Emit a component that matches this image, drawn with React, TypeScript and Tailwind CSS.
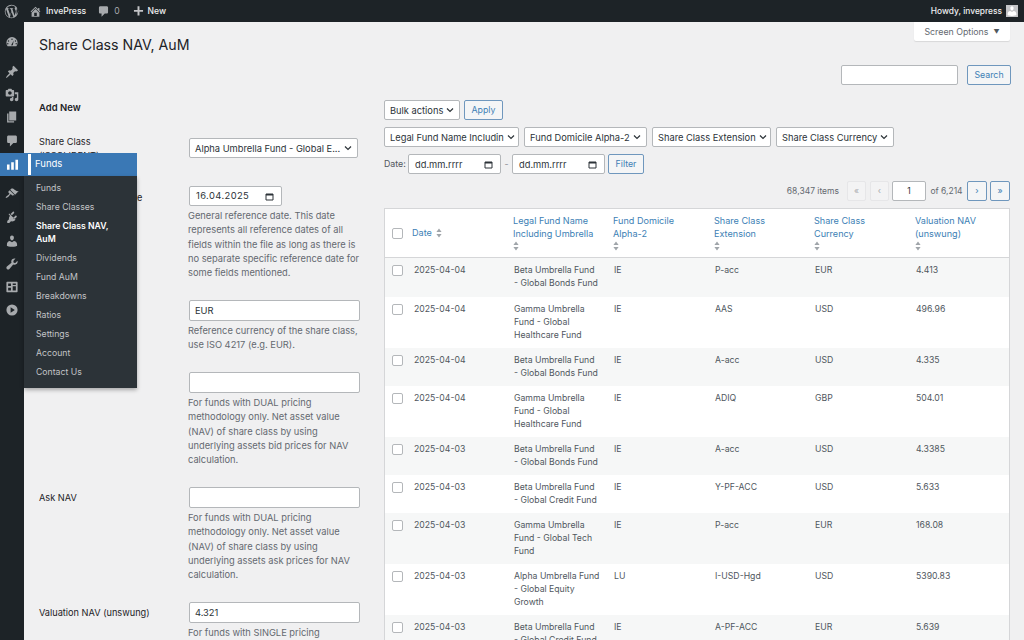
import React from "react";

const rows = [
  ["2025-04-04", "Beta Umbrella Fund\n- Global Bonds Fund", "IE", "P-acc", "EUR", "4.413", "h-[39px]"],
  ["2025-04-04", "Gamma Umbrella Fund - Global Healthcare Fund", "IE", "AAS", "USD", "496.96", "h-[51px]"],
  ["2025-04-04", "Beta Umbrella Fund\n- Global Bonds Fund", "IE", "A-acc", "USD", "4.335", "h-[38px]"],
  ["2025-04-04", "Gamma Umbrella Fund - Global Healthcare Fund", "IE", "ADIQ", "GBP", "504.01", "h-[51px]"],
  ["2025-04-03", "Beta Umbrella Fund\n- Global Bonds Fund", "IE", "A-acc", "USD", "4.3385", "h-[38px]"],
  ["2025-04-03", "Beta Umbrella Fund\n- Global Credit Fund", "IE", "Y-PF-ACC", "USD", "5.633", "h-[38px]"],
  ["2025-04-03", "Gamma Umbrella Fund - Global Tech Fund", "IE", "P-acc", "EUR", "168.08", "h-[51px]"],
  ["2025-04-03", "Alpha Umbrella Fund\n- Global Equity Growth", "LU", "I-USD-Hgd", "USD", "5390.83", "h-[51px]"],
  ["2025-04-03", "Beta Umbrella Fund\n- Global Credit Fund", "IE", "A-PF-ACC", "EUR", "5.639", "h-[38px]"],
];

const submenu = ["Funds", "Share Classes", "Share Class NAV, AuM", "Dividends", "Fund AuM", "Breakdowns", "Ratios", "Settings", "Account", "Contact Us"];

function Dash({ d, size = 14, className = "" }: { d: string; size?: number; className?: string }) {
  return (
    <svg width={size} height={size} viewBox="0 0 20 20" fill="currentColor" fillRule="evenodd" className={"shrink-0 " + className}>
      <path d={d} />
    </svg>
  );
}

const icons = {
  home: "M16 8.5l1.53 1.53-1.06 1.06L10 4.62l-6.47 6.47-1.06-1.06L10 2.5l4 4v-2h2v4zm-6-2.46l6 5.99V18H4v-5.97zM12 17v-5H8v5h4z",
  bubble: "M5 2h10c1.1 0 2 .9 2 2v7c0 1.1-.9 2-2 2h-3l-5 5v-5H5c-1.1 0-2-.9-2-2V4c0-1.100.9-2 2-2z",
  plus: "M17 7.500v3h-5.500V16h-3v-5.500H3v-3h5.500V2h3v5.500z",
  gauge: "M3.760 16h12.480A7.980 7.980 0 0 0 18 11a8 8 0 0 0-16 0c0 1.890.660 3.630 1.760 5zM10 5a1 1 0 1 1 0 2 1 1 0 0 1 0-2zM5 7.500a1 1 0 1 1 0 2 1 1 0 0 1 0-2zM15 7.500a1 1 0 1 1 0 2 1 1 0 0 1 0-2zM4 11.500a1 1 0 1 1 0 2 1 1 0 0 1 0-2zM16 11.500a1 1 0 1 1 0 2 1 1 0 0 1 0-2zM9 14.500a1.500 1.500 0 0 1 .6-1.200L12.500 8l-1.200 5.800A1.500 1.500 0 0 1 9 14.500z",
  pin: "M10.440 3.020l1.820-1.820 6.360 6.350-1.830 1.820c-1.050-.680-2.480-.570-3.410.360l-.750.750c-.920.930-1.040 2.350-.350 3.410l-1.830 1.820-2.410-2.410-2.800 2.790c-.420.420-3.380 2.710-3.800 2.290s1.860-3.390 2.280-3.810l2.790-2.790L4.100 9.360l1.830-1.820c1.050.690 2.480.570 3.400-.360l.750-.750c.930-.920 1.050-2.350.360-3.410z",
  media: "M13 11V4c0-.550-.450-1-1-1h-1.670L9 1H5L3.670 3H2c-.550 0-1 .450-1 1v7c0 .550.450 1 1 1h10c.550 0 1-.450 1-1zM7 4.500c1.380 0 2.500 1.120 2.500 2.500S8.380 9.500 7 9.500 4.500 8.380 4.500 7 5.620 4.500 7 4.500zM14 6h5v10.500c0 1.380-1.120 2.500-2.500 2.500S14 17.880 14 16.500s1.120-2.500 2.500-2.500c.170 0 .340.020.500.050V9h-3V6zm-4 8.050V13h2v3.500c0 1.380-1.120 2.500-2.500 2.500S7 17.880 7 16.500 8.120 14 9.500 14c.170 0 .340.020.500.050z",
  page: "M6 15V2h10v13H6zm-1 1h8v2H3V5h2v11z",
  brush: "M14.480 11.060L7.410 3.990l1.500-1.500c.5-.560 2.300-.470 3.510.320 1.210.800 1.430 1.280 2.910 2.100 1.180.640 2.450 1.260 4.230.910zm-.710.710L6.700 4.700 4.930 6.470c-.390.390-.390 1.020 0 1.410l1.060 1.060c.390.390.390 1.030 0 1.420-.600.600-1.430 1.110-2.210 1.690-.350.260-.700.530-1.010.840C1.430 13.230 1 15.800 1 15.800s2.570-.430 3.920-1.770c.310-.310.580-.660.840-1.010.580-.780 1.090-1.610 1.690-2.210.390-.390 1.020-.390 1.410 0l1.060 1.060c.390.390 1.020.390 1.410 0z",
  plugin: "M13.110 4.360L9.870 7.600 8 5.730l3.240-3.240c.350-.340 1.050-.250 1.540.240.490.490.580 1.190.330 1.630zM5.110 6.130l.910-1.120 9.010 9.010-1.190.840c-1.230.930-2.550 1.400-3.900 1.400-.460 0-.930-.060-1.370-.170l-2.530 2.530H3.200v-2.830l2.530-2.530c-.400-1.700.140-3.450 1.370-5.130zM16.500 8.490c.490.490.580 1.190.240 1.540l-3.240 3.240-1.880-1.870 3.240-3.240c.340-.340 1.050-.260 1.640.330z",
  user: "M10 9.250c-2.270 0-2.730-3.440-2.730-3.440C7 4.020 7.820 2 9.970 2c2.160 0 2.980 2.020 2.710 3.810 0 0-.410 3.440-2.680 3.440zm0 2.570L12.720 10c2.390 0 4.520 2.330 4.520 4.530v2.490s-3.650 1.130-7.240 1.130c-3.650 0-7.240-1.130-7.240-1.130v-2.490c0-2.250 1.940-4.480 4.150-4.480z",
  wrench: "M16.680 9.770c-1.340 1.340-3.300 1.670-4.950.990l-5.410 6.520c-.990.990-2.590.990-3.570 0-.990-.990-.990-2.590 0-3.570l6.520-5.420c-.680-1.650-.350-3.610.990-4.950 1.280-1.280 3.120-1.640 4.720-1.110L11.880 5.790 12.400 8.110l2.320.520 3.060-3.100c.530 1.600.170 3.440-1.100 4.720z",
  grid: "M3 2.500h14c.550 0 1 .450 1 1v13c0 .550-.450 1-1 1H3c-.550 0-1-.450-1-1v-13c0-.550.450-1 1-1zM4.500 5v3.500h4V5zM11 5v2h4.500V5zM11 9v6h4.500V9zM4.500 11v4h4v-4z",
  play: "M10 2a8 8 0 1 0 0 16 8 8 0 0 0 0-16zM8 6l6 4-6 4z",
  chart: "M1.500 10h4v8h-4zM8 6.500h4V18H8zM14.500 2.500h4V18h-4z",
  wp: "M10 1a9 9 0 1 0 0 18 9 9 0 0 0 0-18zM2 10c0-1.200.3-2.300.7-3.300l3.800 10.500A8 8 0 0 1 2 10zm8 8c-.8 0-1.500-.1-2.300-.3l2.400-7 2.500 6.800A8 8 0 0 1 10 18zm1.100-11.800c.5 0 .9-.1.9-.1.4 0 .4-.7 0-.7 0 0-1.300.1-2.100.1s-2.100-.1-2.100-.1c-.4 0-.5.7 0 .7 0 0 .4.1.9.1l1.200 3.400-1.700 5.200L5.300 6.200c.5 0 .9-.1.9-.1.4 0 .4-.7 0-.7 0 0-1.300.1-2.100.1h-.5A8 8 0 0 1 15.600 4.300h-.1c-.8 0-1.300.7-1.300 1.400s.4 1.200.8 1.900c.3.6.7 1.300.7 2.400 0 .7-.3 1.600-.7 2.700l-.9 3-3-9.500zm5.700 8a8 8 0 0 0 .3-9.500c.1.400.1.800.1 1.200 0 .8-.2 1.800-.6 2.900z",
};

function Sort() {
  return (
    <svg width="6" height="10" viewBox="0 0 6 10" className="inline-block">
      <path d="M3 0.500 L5.600 4 H0.400 Z M3 9.500 L0.400 6 H5.600 Z" fill="#a0a5aa" />
    </svg>
  );
}

function Chevron() {
  return (
    <svg width="8" height="8" viewBox="0 0 8 8" className="shrink-0 ml-[3px]">
      <path d="M1 2.500 L4 5.500 L7 2.500" fill="none" stroke="#2c3338" strokeWidth="1.200" />
    </svg>
  );
}

function CalendarIcon() {
  return (
    <svg width="9" height="9" viewBox="0 0 9 9" className="shrink-0">
      <path d="M1 2H8V8H1Z" fill="none" stroke="#2c3338" strokeWidth="1" />
      <path d="M1 2H8V3.500H1Z" fill="#2c3338" />
    </svg>
  );
}

function Select({ children, className = "" }: { children: React.ReactNode; className?: string }) {
  return (
    <div className={"h-[20px] flex items-center justify-between bg-white border border-[#b4b7ba] rounded-[2px] pl-[5px] pr-[5px] text-[#2c3338] whitespace-nowrap overflow-hidden " + className}>
      <span className="pt-[1px]">{children}</span>
      <Chevron />
    </div>
  );
}

function Btn({ children, className = "" }: { children: React.ReactNode; className?: string }) {
  return (
    <div className={"h-[20px] flex items-center justify-center bg-[#f4f5f6] border border-[#6f97bd] rounded-[2px] text-[8.8px] text-[#3d7fb5] " + className}>{children}</div>
  );
}

function DateBox({ value, className = "" }: { value: string; className?: string }) {
  return (
    <div className={"h-[20px] flex items-center justify-between bg-white border border-[#b4b7ba] rounded-[2px] pl-[6px] pr-[7px] text-[#2c3338] " + className}>
      <span className="pt-[1px]">{value}</span>
      <CalendarIcon />
    </div>
  );
}

function Field({ label, children, labelClass = "" }: { label?: string; children: React.ReactNode; labelClass?: string }) {
  return (
    <div className="flex">
      <div className={"w-[150px] shrink-0 text-[9.2px] text-[#1d2327] " + labelClass}>{label}</div>
      <div className="w-[172px]">{children}</div>
    </div>
  );
}

function Input({ value = "" }: { value?: string }) {
  return <div className="w-[171px] h-[21px] bg-white border border-[#b4b7ba] rounded-[2px] flex items-center px-[5px] text-[9.3px] text-[#2c3338]">{value}</div>;
}

function Desc({ children }: { children: React.ReactNode }) {
  return <p className="text-[9.3px] leading-[14.3px] text-[#646970] mt-[3px] w-[173px] -ml-[1px]">{children}</p>;
}

const sideItems: [string, string][] = [
  [icons.gauge, "mt-[13px]"],
  [icons.pin, "mt-[16px]"],
  [icons.media, "mt-[8.5px]"],
  [icons.page, "mt-[8.5px]"],
  [icons.bubble, "mt-[9.5px]"],
  [icons.brush, "mt-[39px]"],
  [icons.plugin, "mt-[9.5px]"],
  [icons.user, "mt-[10px]"],
  [icons.wrench, "mt-[8.5px]"],
  [icons.grid, "mt-[9.5px]"],
  [icons.play, "mt-[8.5px]"],
];

const headCols: [string, string][] = [
  ["Legal Fund Name Including Umbrella", "w-[100px]"],
  ["Fund Domicile Alpha-2", "w-[101px]"],
  ["Share Class Extension", "w-[100px]"],
  ["Share Class Currency", "w-[101px]"],
  ["Valuation NAV (unswung)", "w-[90px]"],
];

export default function App() {
  return (
    <div className="w-[1024px] h-[640px] overflow-hidden relative bg-[#f0f0f1] flex flex-col font-['Inter','Liberation_Sans',sans-serif]">
      <header className="h-[22px] shrink-0 bg-[#1d2327] flex items-center text-[8.6px] text-[#f0f0f1] pl-[4px] pr-[6px]">
        <Dash d={icons.wp} size={15} className="text-[#a7aaad] mr-[10px]" />
        <Dash d={icons.home} size={13} className="text-[#a7aaad] mr-[4px]" />
        <span className="mr-[11px] font-medium">InvePress</span>
        <Dash d={icons.bubble} size={13} className="text-[#a7aaad] mr-[4px]" />
        <span className="mr-[12px] text-[#a7aaad]">0</span>
        <Dash d={icons.plus} size={13} className="text-[#c3c4c7] mr-[3px]" />
        <span className="font-medium">New</span>
        <span className="ml-auto font-medium text-[8.4px]">Howdy, invepress</span>
        <div className="ml-[4px] w-[12px] h-[12px] bg-[#c3c4c7] flex items-end justify-center overflow-hidden text-white"><Dash d={icons.user} size={12} /></div>
      </header>

      <div className="flex flex-1 min-h-0">
        <aside className="w-[24px] shrink-0 bg-[#1d2327] flex flex-col items-center text-[#a7aaad]">
          {sideItems.map(([d, m], i) => (
            <Dash key={i} d={d} size={14} className={m} />
          ))}
        </aside>

        <main className="flex-1 min-w-0 relative px-[15px]">
          <div className="absolute right-[14px] top-0 w-[96px] h-[19px] bg-white rounded-b-[2px] shadow-[0_1px_1px_rgba(0,0,0,0.1)] flex items-center justify-center gap-[5px] text-[8.8px] text-[#646970]">
            Screen Options <span className="text-[6px] text-[#50575e]">▼</span>
          </div>
          <h1 className="text-[14.2px] text-[#1d2327] mt-[14px] h-[21px] leading-[17px]">Share Class NAV, AuM</h1>
          <div className="flex justify-end gap-[9px] mt-[8px] -mr-[2px]">
            <div className="w-[117px] h-[20px] bg-white border border-[#b4b7ba] rounded-[2px]" />
            <Btn className="w-[44px]">Search</Btn>
          </div>

          <div className="flex mt-[15px]">
            <div className="w-[345px] shrink-0 pt-[1px]">
              <h2 className="text-[9.5px] font-semibold text-[#1d2327] h-[34px]">Add New</h2>
              <Field label="Share Class (ISSCLIDENT)" labelClass="leading-[14px] h-[14px] pr-[70px]">
                <Select className="w-[169px] mt-[3px] text-[9.3px]">Alpha Umbrella Fund - Global E...</Select>
              </Field>
              <div className="h-[28px]" />
              <Field label="General Reference Date" labelClass="pt-[5px]">
                <DateBox value="16.04.2025" className="w-[93px] text-[9.4px] tracking-[0.4px]" />
                <Desc>General reference date. This date represents all reference dates of all fields within the file as long as there is no separate specific reference date for some fields mentioned.</Desc>
              </Field>
              <div className="h-[19.5px]" />
              <Field label="Currency" labelClass="pt-[4px]">
                <Input value="EUR" />
                <Desc>Reference currency of the share class, use ISO 4217 (e.g. EUR).</Desc>
              </Field>
              <div className="h-[19.5px]" />
              <Field label="Bid NAV" labelClass="pt-[4px]">
                <Input />
                <Desc>For funds with DUAL pricing methodology only. Net asset value (NAV) of share class by using underlying assets bid prices for NAV calculation.</Desc>
              </Field>
              <div className="h-[19.5px]" />
              <Field label="Ask NAV" labelClass="pt-[4px]">
                <Input />
                <Desc>For funds with DUAL pricing methodology only. Net asset value (NAV) of share class by using underlying assets ask prices for NAV calculation.</Desc>
              </Field>
              <div className="h-[19.5px]" />
              <Field label="Valuation NAV (unswung)" labelClass="pt-[4px]">
                <Input value="4.321" />
                <Desc>For funds with SINGLE pricing methodology only.</Desc>
              </Field>
            </div>

            <div className="w-[626px] shrink-0">
              <div className="flex gap-[4px]">
                <Select className="w-[76px] text-[9.3px]">Bulk actions</Select>
                <Btn className="w-[39px]">Apply</Btn>
              </div>
              <div className="flex gap-[5px] mt-[7px] text-[9.3px]">
                <Select className="w-[135px]">Legal Fund Name Includin</Select>
                <Select className="w-[123px]">Fund Domicile Alpha-2</Select>
                <Select className="w-[119px]">Share Class Extension</Select>
                <Select className="w-[118px]">Share Class Currency</Select>
              </div>
              <div className="flex items-center gap-[3px] mt-[7px] text-[8.8px] text-[#50575e]">
                <span className="w-[21px]">Date:</span>
                <DateBox value="dd.mm.rrrr" className="w-[93px] text-[9.3px]" />
                <span className="w-[5px] text-center text-[#8c8f94]">-</span>
                <DateBox value="dd.mm.rrrr" className="w-[93px] text-[9.3px]" />
                <Btn className="w-[36px]">Filter</Btn>
              </div>
              <div className="flex items-center justify-end text-[8.5px] text-[#646970] mt-[7px] h-[20px]">
                <span className="mr-[8px]">68,347 items</span>
                <div className="w-[19px] h-[20px] mr-[4px] flex items-center justify-center bg-[#f3f3f4] border border-[#e6e6e8] text-[#a7aaad] rounded-[2px]">«</div>
                <div className="w-[19px] h-[20px] mr-[3px] flex items-center justify-center bg-[#f3f3f4] border border-[#e6e6e8] text-[#a7aaad] rounded-[2px]">‹</div>
                <div className="w-[34px] h-[20px] flex items-center justify-center bg-white border border-[#b4b7ba] rounded-[2px] text-[#2c3338]">1</div>
                <span className="mx-[4px] w-[33px] text-center whitespace-nowrap">of 6,214</span>
                <Btn className="w-[20px] mr-[3px]">›</Btn>
                <Btn className="w-[20px]">»</Btn>
              </div>

              <div className="mt-[7px] bg-white border border-[#d5d6d8]">
                <div className="h-[49px] flex border-b border-[#d5d6d8] text-[9.1px] leading-[13.2px] text-[#3d7fb5]">
                  <div className="w-[26px] flex items-center pl-[7px]"><span className="w-[11px] h-[11px] border border-[#b4b7ba] rounded-[2px] bg-white" /></div>
                  <div className="w-[102px] flex items-center gap-[4px] pl-[1px]"><span className="text-[#3d7fb5]">Date</span> <Sort /></div>
                  {headCols.map(([t, w]) => (
                    <div key={t} className={w + " pt-[5px] pr-[14px]"}>{t}<div className="leading-[10px]"><Sort /></div></div>
                  ))}
                </div>
                {rows.map((r, i) => (
                  <div key={i} className={"flex text-[8.7px] leading-[13.2px] text-[#50575e] " + r[6] + (i % 2 === 0 ? " bg-[#f6f7f7]" : " bg-white")}>
                    <div className="w-[26px] pl-[7px] pt-[7px]"><span className="block w-[11px] h-[11px] border border-[#b4b7ba] rounded-[2px] bg-white" /></div>
                    <div className="w-[103px] pl-[3px] pt-[5.5px]">{r[0]}</div>
                    <div className="w-[100px] pt-[5.5px] pr-[12px] whitespace-pre-line">{r[1]}</div>
                    <div className="w-[101px] pt-[5.5px]">{r[2]}</div>
                    <div className="w-[100px] pt-[5.5px]">{r[3]}</div>
                    <div className="w-[101px] pt-[5.5px]">{r[4]}</div>
                    <div className="w-[89px] pt-[5.5px]">{r[5]}</div>
                  </div>
                ))}
              </div>
            </div>
          </div>
        </main>
      </div>

      {/* Flyout menu over the page */}
      <div className="absolute left-0 top-[153px] w-[137px]">
        <div className="h-[23px] bg-[#3a78b5] flex items-center text-white text-[9.5px]">
          <div className="w-[24px] flex justify-center"><Dash d={icons.chart} size={13} /></div>
          <div className="w-[3px] h-[21px] bg-white ml-[4px] mr-[4px]" />
          <span>Funds</span>
        </div>
        <div className="ml-[24px] bg-[#2c3338] h-[212px] pt-[3px] pl-[12px] pr-[20px] text-[8.7px] text-[#c3c4c7] shadow-[0_2px_4px_rgba(0,0,0,0.3)]">
          {submenu.map((s) => (
            <div key={s} className={s === "Share Class NAV, AuM" ? "py-[3px] leading-[13px] font-semibold text-white" : "py-[3px] leading-[13px]"}>{s}</div>
          ))}
        </div>
      </div>
    </div>
  );
}
